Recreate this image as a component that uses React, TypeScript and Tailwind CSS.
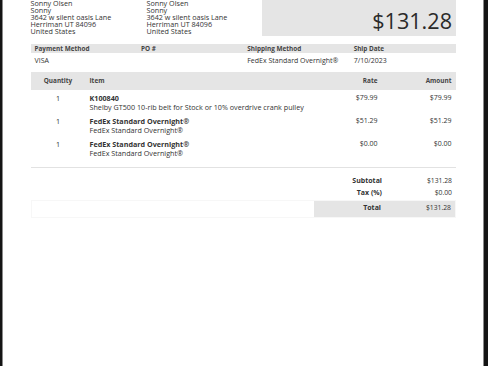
import React from "react";

const rows = [
  { qty: "1", title: "K100840", desc: "Shelby GT500 10-rib belt for Stock or 10% overdrive crank pulley", rate: "$79.99", amount: "$79.99" },
  { qty: "1", title: "FedEx Standard Overnight®", desc: "FedEx Standard Overnight®", rate: "$51.29", amount: "$51.29" },
  { qty: "1", title: "FedEx Standard Overnight®", desc: "FedEx Standard Overnight®", rate: "$0.00", amount: "$0.00" },
];

function Address() {
  return (
    <div className="flex flex-col">
      <span>Sonny Olsen</span>
      <span>Sonny</span>
      <span>3642 w silent oasis Lane</span>
      <span>Herriman UT 84096</span>
      <span>United States</span>
    </div>
  );
}

export default function App() {
  return (
    <div className="flex h-[366px] w-[488px] overflow-hidden bg-[#141414] font-['Open_Sans',sans-serif] text-[#333]">
      <div className="w-[3px] shrink-0 border-r border-[#8a8a8a] bg-[#141414]" />
      <div className="flex-1 bg-white pl-[27.5px] pr-[27px]">
        {/* header */}
        <div className="flex h-[36px] items-end">
          <div className="w-[116px] text-[7.2px] leading-[7px] pb-[1px]">
            <Address />
          </div>
          <div className="w-[115px] text-[7.2px] leading-[7px] pb-[1px]">
            <Address />
          </div>
          <div className="flex-1" />
          <div className="flex h-full w-[194px] items-end justify-end bg-[#e5e5e5] pr-[4px] pb-[1px]">
            <span className="text-[21.6px] leading-[28px] text-[#2a2a2a]">$131.28</span>
          </div>
        </div>

        {/* info table */}
        <div className="mt-[8px]">
          <div className="grid h-[9px] grid-cols-4 items-center bg-[#e5e5e5] text-[6.4px] font-bold leading-[9px] text-[#444]">
            <span className="pl-[4px]">Payment Method</span>
            <span className="pl-[4px]">PO #</span>
            <span className="pl-[4px]">Shipping Method</span>
            <span className="pl-[4px]">Ship Date</span>
          </div>
          <div className="grid grid-cols-4 pt-[3.5px] text-[7px] leading-[7px]">
            <span className="pl-[4px]">VISA</span>
            <span className="pl-[4px]"></span>
            <span className="pl-[4px]">FedEx Standard Overnight®</span>
            <span className="pl-[4px]">7/10/2023</span>
          </div>
        </div>

        {/* items */}
        <div className="mt-[8.5px]">
          <div className="grid h-[18px] grid-cols-[55px_216px_80px_74px] items-center bg-[#e5e5e5] text-[6.4px] font-bold text-[#444]">
            <span className="text-center">Quantity</span>
            <span className="pl-[4px]">Item</span>
            <span className="pr-[4px] text-right">Rate</span>
            <span className="pr-[4px] text-right">Amount</span>
          </div>
          <div className="border-b border-[#e2e2e2] pb-[7.5px]">
            {rows.map((r, i) => (
              <div key={i} className="grid grid-cols-[55px_216px_80px_74px] pt-[4px] pb-[2px] text-[7.2px] leading-[8.5px]">
                <span className="text-center">{r.qty}</span>
                <div className="flex flex-col whitespace-nowrap pl-[4px]">
                  <span className="font-bold">{r.title}</span>
                  <span>{r.desc}</span>
                </div>
                <span className="pr-[4px] text-right text-[7px]">{r.rate}</span>
                <span className="pr-[4px] text-right text-[7px]">{r.amount}</span>
              </div>
            ))}
          </div>
        </div>

        {/* summary */}
        <div className="mt-[7.5px] text-[6.8px]">
          <div className="flex h-[12px] items-center">
            <div className="flex-1" />
            <span className="w-[67px] text-right text-[7px] font-bold">Subtotal</span>
            <span className="w-[74px] pr-[4px] text-right">$131.28</span>
          </div>
          <div className="flex h-[12px] items-center">
            <div className="flex-1" />
            <span className="w-[67px] text-right text-[7px] font-bold">Tax (%)</span>
            <span className="w-[74px] pr-[4px] text-right">$0.00</span>
          </div>
          <div className="mt-[0.5px] flex h-[18px] items-center border border-[#f7f7f7]">
            <div className="flex-1" />
            <div className="flex h-full items-center bg-[#e5e5e5]">
              <span className="w-[67px] text-right text-[7px] font-bold">Total</span>
              <span className="w-[74px] pr-[4px] text-right">$131.28</span>
            </div>
          </div>
        </div>
      </div>
      <div className="w-[5px] shrink-0 border-l border-[#8a8a8a] bg-[#141414]" />
    </div>
  );
}
